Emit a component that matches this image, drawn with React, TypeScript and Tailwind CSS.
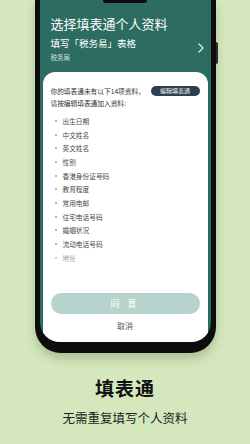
import React from "react";

const items = [
  "出生日期",
  "中文姓名",
  "英文姓名",
  "性别",
  "香港身份证号码",
  "教育程度",
  "常用电邮",
  "住宅电话号码",
  "婚姻状况",
  "流动电话号码",
  "地址",
];

export default function App() {
  return (
    <div
      className="w-[250px] h-[444px] bg-[#d5e8bd] flex flex-col items-center overflow-hidden"
      style={{ fontFamily: '"Noto Sans CJK SC", "Noto Sans", sans-serif' }}
    >
      {/* phone */}
      <div className="relative w-[181px] h-[353px] shrink-0 bg-[#0d0d0d] rounded-b-[26px] px-[5px] pb-[11px] shadow-[0_6px_10px_rgba(60,80,40,0.25)]">
        {/* side buttons */}
        <div className="absolute right-[-2px] top-[42px] w-[2px] h-[22px] bg-[#2a2a2a] rounded-r" />
        <div className="relative w-full h-full bg-[#2d6c60] rounded-b-[20px] overflow-hidden flex flex-col">
          {/* notch */}
          <div className="absolute left-1/2 -translate-x-1/2 top-0 w-[44px] h-[3px] bg-[#0d0d0d] rounded-b-[4px]" />
          {/* header */}
          <div className="relative px-[11px] pt-[15px] h-[72px] shrink-0 text-white">
            <div className="text-[13px] leading-[18px]">选择填表通个人资料</div>
            <div className="text-[9.5px] leading-[14px] mt-[3px]">填写「税务易」表格</div>
            <div className="text-[6.5px] leading-[10px] mt-[2px] text-[#d8e6e2]">税务局</div>
            <svg
              className="absolute right-[6px] top-[42px]"
              width="8"
              height="12"
              viewBox="0 0 8 12"
              fill="none"
            >
              <path d="M2 2 L6 6 L2 10" stroke="#e6f0ee" strokeWidth="1.2" strokeLinecap="round" strokeLinejoin="round" />
            </svg>
          </div>
          {/* card */}
          <div className="flex-1 mx-[3px] bg-white rounded-t-[12px] flex flex-col px-[8px] pt-[13px] pb-[10px] min-h-0">
            <div className="flex items-start justify-between">
              <div className="w-[100px] text-[6.7px] leading-[12px] text-[#333]">
                你的填表通未有以下14项资料，请按编辑填表通加入资料:
              </div>
              <div className="mt-[1px] w-[49px] h-[10px] rounded-full bg-[#2c3e4f] text-white text-[6px] leading-[10px] text-center">
                编辑填表通
              </div>
            </div>
            <div className="relative mt-[5px] h-[150px] overflow-hidden shrink-0">
              {items.map((t) => (
                <div key={t} className="flex items-center h-[13.7px] pl-[4px]">
                  <div className="w-[2px] h-[2px] rounded-full bg-[#9aa0a0] mr-[6px]" />
                  <div className="text-[6.7px] text-[#4a4a4a] leading-[10px]">{t}</div>
                </div>
              ))}
              <div className="absolute left-0 right-0 bottom-0 h-[12px] bg-gradient-to-b from-white/0 to-white/80" />
            </div>
            <div className="flex-1" />
            <div className="h-[21px] rounded-full bg-[#b6d3cd] text-white text-[9px] leading-[21px] text-center tracking-[3px]">
              同 意
            </div>
            <div className="mt-[6px] text-center text-[8px] leading-[12px] text-[#555]">取消</div>
          </div>
        </div>
      </div>
      {/* bottom texts */}
      <div className="mt-[24px] text-[19px] leading-[22px] font-bold text-[#111] tracking-[1px]">填表通</div>
      <div className="mt-[11px] text-[12.5px] leading-[16px] text-[#222]">无需重复填写个人资料</div>
    </div>
  );
}
